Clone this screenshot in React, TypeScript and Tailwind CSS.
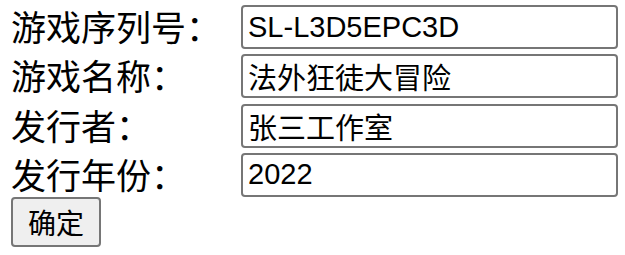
const fields = [
  { label: '游戏序列号：', value: 'SL-L3D5EPC3D' },
  { label: '游戏名称：', value: '法外狂徒大冒险' },
  { label: '发行者：', value: '张三工作室' },
  { label: '发行年份：', value: '2022' },
];

export default function App() {
  return (
    <div className="pl-[11px] pt-[5px] text-black" style={{ fontFamily: '"Liberation Sans", "Noto Sans CJK SC", sans-serif' }}>
      {fields.map((f) => (
        <div key={f.label} className="flex h-[49.25px] items-start">
          <label className="w-[230px] pt-[1px] text-[35px] leading-[40px] font-['Noto_Sans_CJK_SC',sans-serif]">
            {f.label}
          </label>
          <input
            defaultValue={f.value}
            className="h-[44px] w-[377px] rounded-[4px] border-2 border-[#767676] bg-white px-[5px] text-[29px] leading-none outline-none"
          />
        </div>
      ))}
      <button className="mt-[-5px] h-[50px] w-[90px] rounded-[4px] border-2 border-[#767676] bg-[#efefef] text-[28px] leading-none font-['Noto_Sans_CJK_SC',sans-serif]">
        确定
      </button>
    </div>
  );
}
